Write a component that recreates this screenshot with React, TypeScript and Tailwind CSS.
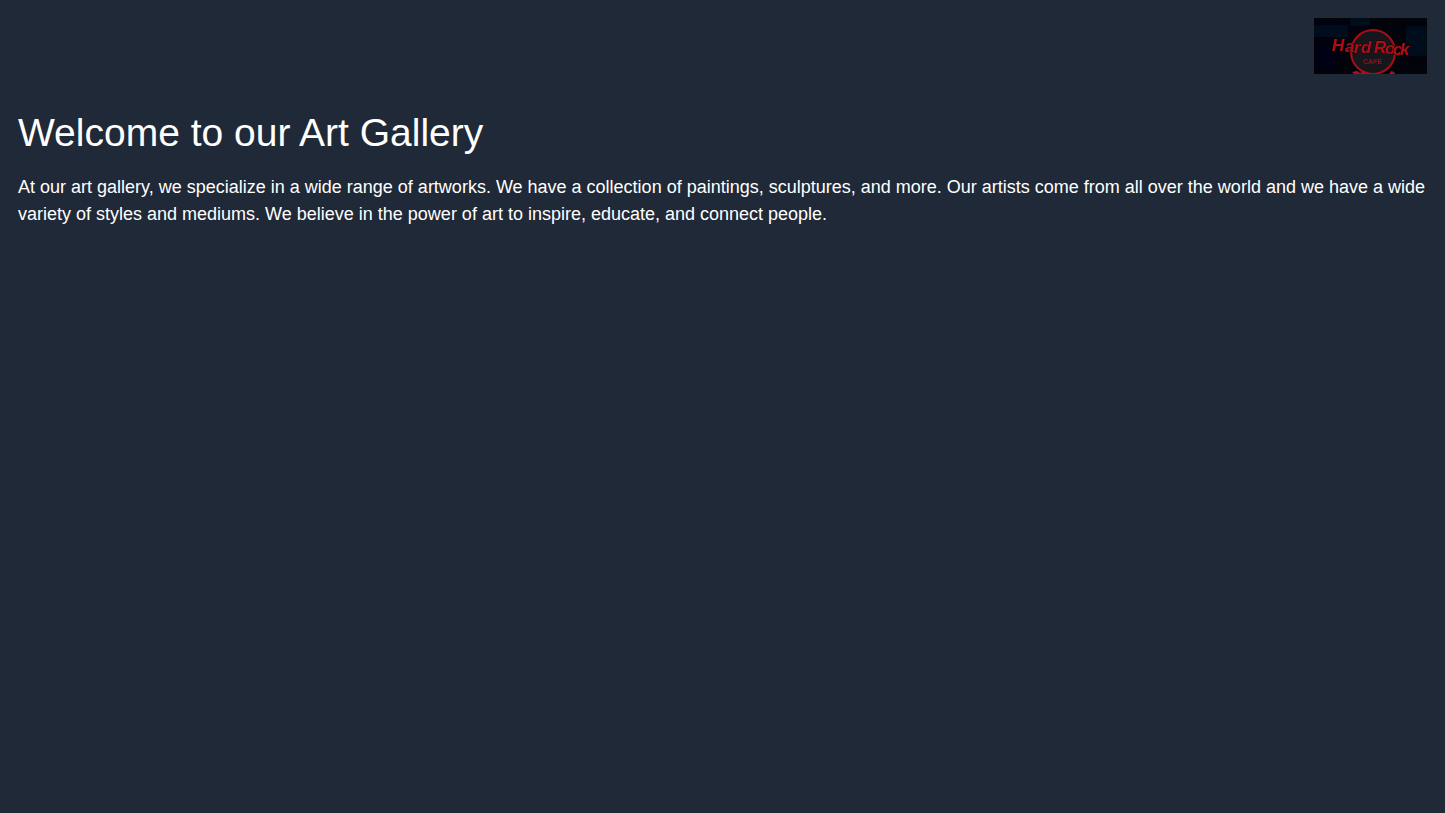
import React from "react";

const Logo = () => {
  return <svg viewBox="0 0 113 56" role="img" aria-label="Hard Rock Cafe" className="w-[113px] h-14">
      <defs>
        <filter id="glow" x="-10%" y="-10%" width="120%" height="120%">
          <feGaussianBlur stdDeviation="0.6" />
        </filter>
        <filter id="haze" x="-20%" y="-20%" width="140%" height="140%">
          <feGaussianBlur stdDeviation="3" />
        </filter>
        <clipPath id="frame">
          <rect width="113" height="56" />
        </clipPath>
      </defs>
      <g clipPath="url(#frame)">
        <rect width="113" height="56" fill="#02030b" />
        {/* Night street behind the sign */}
        <g filter="url(#haze)">
          <rect x="0" y="7" width="34" height="12" fill="#030a24" />
          <rect x="36" y="0" width="20" height="8" fill="#030722" />
          <rect x="92" y="8" width="21" height="30" fill="#03071c" />
          <rect x="4" y="28" width="18" height="22" fill="#020414" />
        </g>
        <g filter="url(#glow)">
          <circle cx="59" cy="34" r="22" fill="#14171d" stroke="#a80f17" strokeWidth="2" />
          <g fontFamily="Liberation Sans, sans-serif" fontWeight="bold" fill="#b00c15">
            <text
              x="18 31 40 47 56 60 71 79 86"
              y="33 34 35 35 35 35 36 37 37"
              fontSize="17"
              fontStyle="italic"
              stroke="#12060c"
              strokeWidth="1"
              paintOrder="stroke"
            >
              Hard Rock
            </text>
            <text x="49" y="46" fontSize="7" fill="#a00d16">CAFE</text>
          </g>
          <path d="M38 54l5-1 3 2 4-2 3 3H40zM75 56l2-3 3 1 1 2z" fill="#b00f19" />
        </g>
      </g>
    </svg>;
};

export default function App() {
  return <div className="min-h-screen bg-[#202937] text-white font-['Liberation_Sans',sans-serif] p-[18px]">
      <header className="flex justify-end mb-9">
        <Logo />
      </header>
      <main>
        <h1 className="text-[39px] leading-[46px] mb-[18px]">
          Welcome to our Art Gallery
        </h1>
        <p className="text-[18px] leading-[27px]">
          At our art gallery, we specialize in a wide range of artworks. We have a collection of paintings,
          sculptures, and more. Our artists come from all over the world and we have a wide variety of styles
          and mediums. We believe in the power of art to inspire, educate, and connect people.
        </p>
      </main>
    </div>;
}
